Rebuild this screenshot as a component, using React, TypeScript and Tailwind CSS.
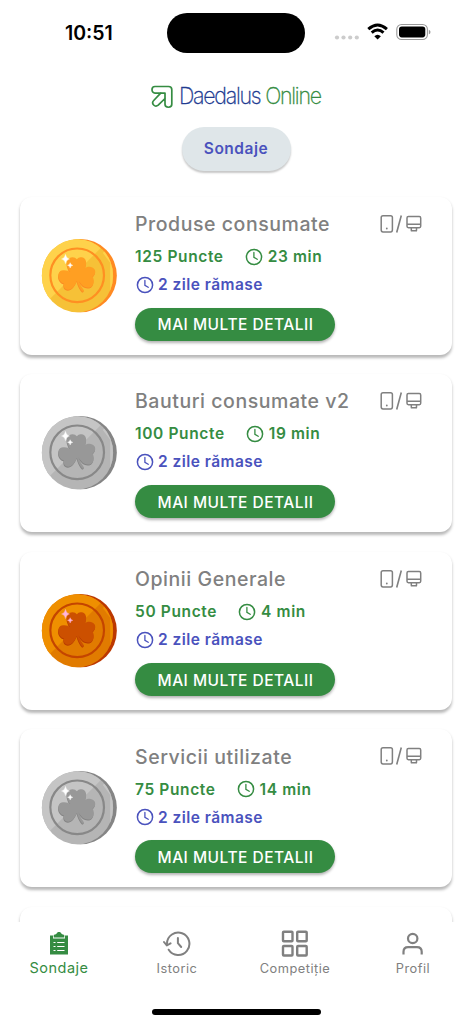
type CoinColors = {
  edge: string;
  face: string;
  shine: string;
  ring: string;
  leaf: string;
  leafShade: string;
  spark: string;
};

const gold: CoinColors = {
  edge: "#ff8a22",
  face: "#f6c137",
  shine: "#fed24b",
  ring: "#ff8f22",
  leaf: "#ff9f22",
  leafShade: "#fb8b24",
  spark: "#ffffff",
};

const silver: CoinColors = {
  edge: "#858585",
  face: "#b5b5b5",
  shine: "#c5c5c5",
  ring: "#888888",
  leaf: "#989898",
  leafShade: "#858585",
  spark: "#ffffff",
};

const bronze: CoinColors = {
  edge: "#bc3800",
  face: "#e17b00",
  shine: "#ef8f00",
  ring: "#c44500",
  leaf: "#cc5000",
  leafShade: "#b83c00",
  spark: "#ffb5df",
};

const surveys = [
  { id: "a", title: "Produse consumate", points: 125, minutes: 23, coin: gold },
  { id: "b", title: "Bauturi consumate v2", points: 100, minutes: 19, coin: silver },
  { id: "c", title: "Opinii Generale", points: 50, minutes: 4, coin: bronze },
  { id: "d", title: "Servicii utilizate", points: 75, minutes: 14, coin: silver },
];

const leafPath =
  "M116 127C109 110 117 96 130 96C136 96 140 98 143 102C147 97 151 95 157 96C170 97 175 112 168 128C176 122 190 122 196 132C201 141 197 149 190 154C196 161 195 179 186 184C174 191 158 184 148 165C152 178 159 187 165 196L160 199C152 191 146 178 143 166C138 181 127 193 117 193C106 193 102 184 104 174C95 173 86 161 88 149C89 138 96 134 105 135C113 135 119 137 124 141C120 137 118 132 116 127Z";

function Coin({ id, colors }: { id: string; colors: CoinColors }) {
  return (
    <svg viewBox="36 38 230 228" className="-ml-px h-[76px] w-[77px] shrink-0">
      <defs>
        <clipPath id={`face-${id}`}>
          <ellipse cx="145" cy="151" rx="107" ry="109.500" />
        </clipPath>
      </defs>
      <ellipse cx="154" cy="151" rx="109" ry="110" fill={colors.edge} />
      <g clipPath={`url(#face-${id})`}>
        <rect x="36" y="38" width="230" height="228" fill={colors.face} />
        <path d="M36 38H245L75 208L36 246Z" fill={colors.shine} />
        <path d="M221 83L227 77L251 103V190L243 197V112Z" fill={colors.shine} />
      </g>
      <circle cx="144" cy="150" r="80.500" fill="none" stroke={colors.ring} strokeWidth="6.500" />
      <path d={leafPath} fill={colors.leafShade} transform="translate(-1 3)" />
      <path d={leafPath} fill={colors.leaf} />
      <path
        d="M109 87Q111 99 121 101Q111 103 109 115Q107 103 97 101Q107 99 109 87ZM123 112Q124 119 131 120Q124 121 123 128Q122 121 115 120Q122 119 123 112Z"
        fill={colors.spark}
        stroke={colors.spark}
      />
    </svg>
  );
}

function ClockIcon() {
  return (
    <svg viewBox="0 0 18 18" className="size-[18px]" fill="none" stroke="currentColor">
      <circle cx="9" cy="9" r="7.600" strokeWidth="1.500" />
      <path d="M8.900 4.500V9.300L12.200 11.300" strokeWidth="1.300" strokeLinecap="round" />
    </svg>
  );
}

function DeviceIcons() {
  return (
    <svg viewBox="0 0 42 20" className="h-5 w-[42px]" fill="none" stroke="#808080">
      <rect x="1.200" y="1.700" width="11.200" height="16.200" rx="1.800" strokeWidth="1.500" />
      <circle cx="6.800" cy="14.500" r="0.900" fill="#808080" stroke="none" />
      <path d="M21.300 1.500L16.700 18.500" strokeWidth="1.600" />
      <rect x="27" y="2.500" width="13.700" height="11.200" rx="1.400" strokeWidth="1.500" />
      <path d="M27 10.300H40.700M31.300 13.700V16.700M36.500 13.700V16.700M30.800 16.700H37" strokeWidth="1.500" />
    </svg>
  );
}

function StatusBar() {
  return (
    <div className="flex h-[66px] shrink-0">
      <div className="w-[167px] pt-[20px] pl-[65px] text-[19.5px] leading-[26px] font-semibold text-black">
        10:51
      </div>
      <div className="mt-[13px] h-10 w-[138px] rounded-full bg-black" />
      <svg viewBox="0 0 98 20" className="mt-[22px] ml-[29px] h-5 w-[98px]">
        <g fill="#cccccc">
          <circle cx="3" cy="15.500" r="2.100" />
          <circle cx="9.500" cy="15.500" r="2.100" />
          <circle cx="16.200" cy="15.500" r="2.100" />
          <circle cx="22.800" cy="15.500" r="2.100" />
        </g>
        <g fill="none" stroke="#000" strokeWidth="3">
          <path d="M34.300 7.100Q43.600 -1.100 52.900 7.100" />
          <path d="M37.700 10.600Q43.600 5.500 49.500 10.600" />
        </g>
        <path d="M40.300 14.300Q43.600 11.200 46.900 14.300L43.600 17.600Z" />
        <rect x="62.800" y="2.500" width="30.600" height="15" rx="4.800" fill="none" stroke="#999" strokeWidth="1.100" />
        <rect x="65" y="4.600" width="26.300" height="10.800" rx="2.800" />
        <path d="M94.800 7.700C97 8.500 97 11.500 94.800 12.300Z" fill="#999" />
      </svg>
    </div>
  );
}

function Header() {
  return (
    <header className="flex h-[130px] shrink-0 flex-col items-center">
      <div className="mt-[17px] flex h-[27px] items-center">
        <svg viewBox="0 0 22 24" className="mr-[6px] h-6 w-[22px]" fill="none" stroke="#358c42" strokeWidth="1.700" strokeLinejoin="round">
          <path d="M4 1.500H17.500C19.500 1.500 20.800 2.800 20.800 4.800V19.300C20.800 23.200 14 23.200 14 19.300V13.500L7.200 20.200C4 22.800 -0.200 18.600 2.700 15.500L9.700 8.100H4C0 8.100 0 1.500 4 1.500Z" />
          <path d="M9.200 8.100H14V13.500" />
        </svg>
        <div className="w-[143px]">
          <div className="w-[159px] origin-left scale-x-[0.93] text-[23px] leading-[27px] font-extralight tracking-[-1.35px] whitespace-nowrap text-[#213b91] [-webkit-text-stroke:0.3px]">
            Daedalus <span className="text-[#358c42]">Online</span>
          </div>
        </div>
      </div>
      <button className="mt-[17px] h-[44px] w-[109px] rounded-full bg-[#dfe6e9] text-[15.5px] font-semibold tracking-[0.5px] text-[#4a52bd] shadow-[0_2px_2px_rgba(0,0,0,0.22)]">
        Sondaje
      </button>
    </header>
  );
}

function SurveyCard({ survey }: { survey: (typeof surveys)[number] }) {
  return (
    <article className="flex h-[158px] shrink-0 rounded-[12px] bg-white pl-[22px] shadow-[0_2.5px_3px_rgba(0,0,0,0.28)]">
      <div className="flex w-[93px] items-center">
        <Coin id={survey.id} colors={survey.coin} />
      </div>
      <div className="flex flex-1 flex-col items-start whitespace-nowrap">
        <div className="mt-[14px] flex h-[26px] w-full items-center justify-between pr-[30px]">
          <h2 className="pt-[2px] text-[19.5px] font-[550] tracking-[0.55px] text-[#808080]">{survey.title}</h2>
          <DeviceIcons />
        </div>
        <div className="mt-[10px] flex h-5 items-center text-[15.5px] font-semibold tracking-[0.63px] text-[#358c42]">
          <span className="mr-[21px]">{survey.points} Puncte</span>
          <ClockIcon />
          <span className="ml-[5px]">{survey.minutes} min</span>
        </div>
        <div className="mt-[8px] flex h-5 items-center gap-1 pl-px text-[15.5px] font-semibold tracking-[0.45px] text-[#4a52bd]">
          <ClockIcon />
          <span>2 zile rămase</span>
        </div>
        <button className="mt-[13px] h-[33px] w-[200px] rounded-full bg-[#358c42] pt-[2px] pl-px text-[15.5px] font-[550] tracking-[0.5px] text-white shadow-[0_2px_3px_rgba(0,0,0,0.3)]">
          MAI MULTE DETALII
        </button>
      </div>
    </article>
  );
}

function TabBar() {
  return (
    <nav className="flex h-[102px] shrink-0 flex-col items-center justify-between bg-white">
      <div className="grid w-full grid-cols-4 text-[12.8px] tracking-[0.5px] text-[#808080]">
        <div className="flex flex-col items-center text-[14.5px] text-[#358c42]">
          <svg viewBox="0 0 20 24" className="mt-[9px] h-6 w-5">
            <path d="M1 4.500H4V7.500H16V4.500H19V23.500H1Z" fill="#358c42" />
            <path d="M4.700 6.500V4C4.700 3.500 7.500 3.500 7.700 2.500C8 .5 12 .5 12.300 2.500C12.500 3.500 15.300 3.500 15.300 4V6.500Z" fill="#358c42" />
            <path d="M4.500 11.500H6.500M8.200 11.500H15.500M4.500 15.500H6.500M8.200 15.500H15.500M4.500 19.500H6.500M8.200 19.500H15.500" stroke="white" strokeWidth="1.200" />
          </svg>
          <span className="mt-[3px] leading-5">Sondaje</span>
        </div>
        <div className="flex flex-col items-center">
          <svg viewBox="0 0 28 28" className="mt-[8px] size-7" fill="none" stroke="#808080" strokeWidth="2" strokeLinecap="round">
            <path d="M4 13.500A11.200 11.200 0 1 1 5.700 19.700" />
            <path d="M1 12L3.800 15.500L7.500 13.300" strokeLinejoin="round" />
            <path d="M14.900 8V13.200L18.200 17" />
          </svg>
          <span className="mt-[1px] leading-5">Istoric</span>
        </div>
        <div className="flex flex-col items-center">
          <svg viewBox="0 0 28 28" className="mt-[8px] size-7" fill="none" stroke="#808080" strokeWidth="2.400">
            <rect x="2" y="1.700" width="9.500" height="9.500" rx=".8" />
            <rect x="16.200" y="1.700" width="9.500" height="9.500" rx=".8" />
            <rect x="2" y="16" width="9.500" height="9.500" rx=".8" />
            <rect x="16.200" y="16" width="9.500" height="9.500" rx=".8" />
          </svg>
          <span className="mt-[1px] leading-5">Competiție</span>
        </div>
        <div className="flex flex-col items-center">
          <svg viewBox="0 0 28 28" className="mt-[8px] size-7" fill="none" stroke="#808080" strokeWidth="2.200">
            <circle cx="13.700" cy="8.500" r="4.700" />
            <path d="M4.500 24.500V21.700Q4.500 17.100 9.100 17.100H18Q22.700 17.100 22.700 21.700V24.500" />
          </svg>
          <span className="mt-[1px] leading-5">Profil</span>
        </div>
      </div>
      <div className="mb-[9px] h-[6px] w-[169px] rounded-full bg-black" />
    </nav>
  );
}

export default function App() {
  return (
    <div className="flex h-[1024px] w-[472px] flex-col overflow-hidden bg-white font-['Inter',sans-serif]">
      <StatusBar />
      <Header />
      <main className="flex min-h-0 flex-1 flex-col gap-[19.6px] overflow-hidden px-5 pt-[0.5px]">
        {surveys.map((survey) => (
          <SurveyCard key={survey.id} survey={survey} />
        ))}
        <div className="h-[158px] shrink-0 rounded-[12px] bg-white shadow-[0_2.5px_3px_rgba(0,0,0,0.28)]" />
      </main>
      <TabBar />
    </div>
  );
}
